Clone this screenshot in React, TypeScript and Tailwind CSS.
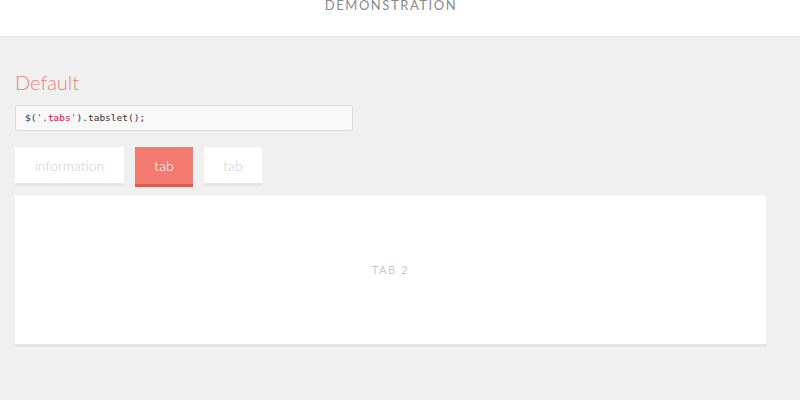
export default function App() {
  return (
    <main className="min-h-screen bg-[#f0f0f0] font-['Lato','Liberation_Sans',sans-serif]">
      <header className="h-[37px] bg-white border-b border-[#e4e4e4] overflow-hidden">
        <h2 className="text-center text-[13px] leading-none tracking-[0.12em] text-[#8a8a8a] -mt-[1px] pr-[18px]">
          DEMONSTRATION
        </h2>
      </header>
      <section className="px-[15px]">
        <h3 className="mt-[33px] text-[20px] leading-[24px] font-light text-[#e8827a]">
          Default
        </h3>
        <pre className="mt-[11px] w-[338px] h-[26px] bg-[#f8f8f8] border border-[#dcdcdc] rounded-[2px] px-[9px] py-[6px] text-[9.5px] leading-[12px] text-[#333] font-['DejaVu_Sans_Mono',monospace]">
          $(<span className="text-[#d14]">'.tabs'</span>).tabslet();
        </pre>
        <ul className="mt-[16px] flex gap-[11px] text-[14px] font-light">
          <li className="w-[109px] h-[39px] bg-white border-b-[3px] border-[#e6e6e6] flex items-center justify-center text-[#cfcfcf]">
            information
          </li>
          <li className="w-[58px] h-[40px] bg-[#f27a6e] border-b-[3px] border-[#e05a50] flex items-center justify-center text-white">
            tab
          </li>
          <li className="w-[58px] h-[39px] bg-white border-b-[3px] border-[#e6e6e6] flex items-center justify-center text-[#cfcfcf]">
            tab
          </li>
        </ul>
        <div className="mt-[8px] w-[751px] h-[152px] bg-white border-b-[3px] border-[#e4e4e4] flex items-center justify-center">
          <span className="text-[11px] tracking-[0.15em] text-[#c8c8c8] mt-[2px]">TAB 2</span>
        </div>
      </section>
    </main>
  );
}
